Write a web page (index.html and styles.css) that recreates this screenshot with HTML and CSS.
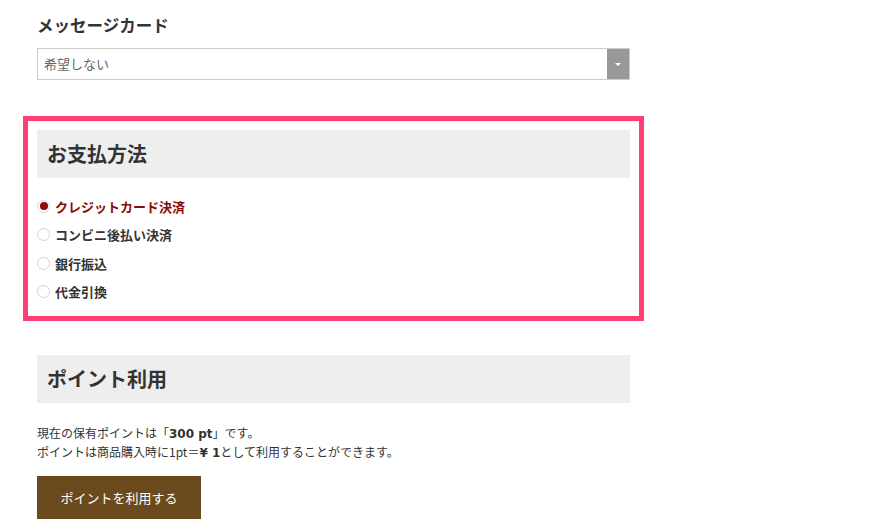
FILE: index.html
```html
<!DOCTYPE html>
<html lang="ja">
<head>
  <meta charset="UTF-8"/>
  <title>ご注文手続き</title>
  <link rel="stylesheet" href="styles.css">
</head>
<body>

<div class="order">
  <h2 class="field-title">メッセージカード</h2>
  <div class="select-box">
    <span class="select-value">希望しない</span>
    <span class="select-arrow"></span>
  </div>

  <div class="payment highlight">
    <h3 class="section-head">お支払方法</h3>
    <ul class="radio-list">
      <li class="radio-item checked"><span class="radio"></span>クレジットカード決済</li>
      <li class="radio-item"><span class="radio"></span>コンビニ後払い決済</li>
      <li class="radio-item"><span class="radio"></span>銀行振込</li>
      <li class="radio-item"><span class="radio"></span>代金引換</li>
    </ul>
  </div>

  <div class="points">
    <h3 class="section-head">ポイント利用</h3>
    <p class="note">
      現在の保有ポイントは「<strong>300 pt</strong>」です。<br>
      ポイントは商品購入時に1pt＝<strong>¥ 1</strong>として利用することができます。
    </p>
    <button class="btn-points">ポイントを利用する</button>
  </div>
</div>

</body>
</html>
```

FILE: styles.css
```css
body {
  margin: 0;
  padding: 0;
  background-color: #fff;
  color: #333;
  font-family: "Noto Sans CJK JP", "Noto Sans", sans-serif;
}

.order {
  width: 593px;
  padding: 13px 0 0 37px;
}

.field-title {
  margin: 0;
  font-size: 16.5px;
  line-height: 24px;
  font-weight: bold;
  color: #333;
}

.select-box {
  margin-top: 11px;
  height: 32px;
  box-sizing: border-box;
  border: 1px solid #ccc;
  display: flex;
  align-items: stretch;
}

.select-value {
  flex: 1;
  padding-left: 6px;
  font-size: 13px;
  line-height: 30px;
  color: #666;
}

.select-arrow {
  width: 22px;
  background-color: #999;
  display: flex;
  justify-content: center;
  align-items: center;
}

.select-arrow::after {
  content: "";
  border-left: 3px solid transparent;
  border-right: 3px solid transparent;
  border-top: 3px solid #fff;
}

.highlight {
  margin: 36px -14px 0 -14px;
  border: 5px solid #fe3e74;
  padding: 9px;
}

.section-head {
  margin: 0;
  height: 48px;
  padding-left: 10px;
  background-color: #eee;
  font-size: 20px;
  line-height: 47px;
  font-weight: bold;
  color: #333;
}

.radio-list {
  list-style: none;
  margin: 14px 0 0 0;
  padding: 0 0 1px 0;
}

.radio-item {
  height: 28.5px;
  display: flex;
  align-items: center;
  gap: 5px;
  font-size: 13px;
  line-height: 1;
  font-weight: bold;
  color: #333;
}

.radio {
  width: 13px;
  height: 13px;
  box-sizing: border-box;
  border: 1px solid #d4d4d4;
  border-radius: 50%;
  background-color: #fff;
  display: flex;
  justify-content: center;
  align-items: center;
}

.radio-item.checked {
  color: #8c0a0a;
}

.radio-item.checked .radio::after {
  content: "";
  width: 8px;
  height: 8px;
  border-radius: 50%;
  background-color: #8c0a0a;
}

.points {
  margin-top: 34px;
}

.note {
  margin: 20px 0 0 0;
  font-size: 12px;
  line-height: 19px;
  color: #333;
}

.note strong {
  font-family: "DejaVu Sans", "Noto Sans CJK JP", sans-serif;
  font-size: 12px;
  line-height: 1;
}

.btn-points {
  display: block;
  margin-top: 15px;
  width: 164px;
  height: 43px;
  border: none;
  background-color: #6b4a1e;
  color: #fff;
  font-family: "Noto Sans CJK JP", sans-serif;
  font-size: 13px;
  cursor: pointer;
}
```
